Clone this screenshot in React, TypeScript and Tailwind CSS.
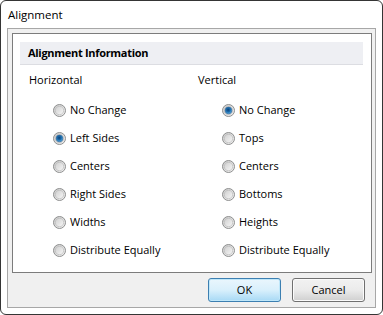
import { useId } from 'react'

const horizontal = ['No Change', 'Left Sides', 'Centers', 'Right Sides', 'Widths', 'Distribute Equally']
const vertical = ['No Change', 'Tops', 'Centers', 'Bottoms', 'Heights', 'Distribute Equally']

const Radio = ({ checked }: { checked: boolean }) => {
    const id = useId().replace(/:/g, '')
    return (
        <svg width="13" height="13" viewBox="0 0 13 13" className="shrink-0">
            <defs>
                <linearGradient id={`ring${id}`} x1="0" y1="0" x2="1" y2="1">
                    <stop offset="0" stopColor="#c9c9c9" />
                    <stop offset="1" stopColor="#f4f4f4" />
                </linearGradient>
                <linearGradient id={`face${id}`} x1="0" y1="0" x2="1" y2="1">
                    <stop offset="0" stopColor="#cfcfcf" />
                    <stop offset="1" stopColor="#f7f7f7" />
                </linearGradient>
                <radialGradient id={`dot${id}`} cx="0.45" cy="0.4" r="0.6">
                    <stop offset="0" stopColor="#0b3f78" />
                    <stop offset="0.55" stopColor="#1c6fb0" />
                    <stop offset="1" stopColor="#62b3e6" />
                </radialGradient>
            </defs>
            <circle cx="6.5" cy="6.5" r="6" fill={`url(#ring${id})`} stroke="#8e8f8f" strokeWidth="1" />
            <circle cx="6.5" cy="6.5" r="4.2" fill={`url(#face${id})`} stroke="#b5b5b5" strokeWidth="0.6" />
            {checked && <circle cx="6.5" cy="6.5" r="3.4" fill={`url(#dot${id})`} stroke="#1d4f82" strokeWidth="0.5" />}
        </svg>
    )
}

const Column = ({ title, items, selected }: { title: string; items: string[]; selected: number }) => (
    <div className="flex flex-col">
        <div className="h-[16px] leading-[16px]">{title}</div>
        <div className="mt-[8px] flex flex-col">
            {items.map((item, i) => (
                <label key={item} className="ml-[24px] flex h-[28px] items-center gap-[4px]">
                    <Radio checked={i === selected} />
                    <span className="leading-[16px]">{item}</span>
                </label>
            ))}
        </div>
    </div>
)

export default function App() {
    return (
        <div
            className="h-[315px] w-[383px] text-[11px] text-black"
            style={{ fontFamily: '"Open Sans", "Noto Sans", "Liberation Sans", sans-serif' }}
        >
            <div className="flex h-full w-full flex-col rounded-[6px] border border-[#353535] bg-white">
                <div className="flex h-[27px] items-center pl-[7px] text-[11.5px]">Alignment</div>
                <div className="mx-[6px] flex h-[280px] flex-col border border-[#a7a7a7] bg-[#f0f0f0] pt-[4px] pr-[3px] pl-[4px]">
                    <div className="flex h-[240px] flex-col border border-[#7c7c7c] bg-white">
                        <div className="mt-[8px] mr-[8px] ml-[7px] flex h-[23px] items-center border-b border-[#dcdde2] bg-[#eeeff3] pl-[8px] font-bold tracking-[-0.3px]">
                            Alignment Information
                        </div>
                        <div className="mt-[7px] grid grid-cols-[169px_1fr] pl-[16px]">
                            <Column title="Horizontal" items={horizontal} selected={1} />
                            <Column title="Vertical" items={vertical} selected={0} />
                        </div>
                    </div>
                    <div className="mt-[5px] flex justify-end gap-[11px] pr-[7px]">
                        <button className="flex h-[24px] w-[73px] items-center justify-center rounded-[3px] border border-[#3c7fb1] bg-gradient-to-b from-[#eaf6fd] via-[#d9f0fc] to-[#a7d9f5] shadow-[inset_0_0_0_1px_#bfe7fa]">
                            OK
                        </button>
                        <button className="flex h-[24px] w-[73px] items-center justify-center rounded-[3px] border border-[#707070] bg-gradient-to-b from-[#f2f2f2] via-[#ebebeb] to-[#cfcfcf] shadow-[inset_0_0_0_1px_#fbfbfb]">
                            Cancel
                        </button>
                    </div>
                </div>
            </div>
        </div>
    )
}
